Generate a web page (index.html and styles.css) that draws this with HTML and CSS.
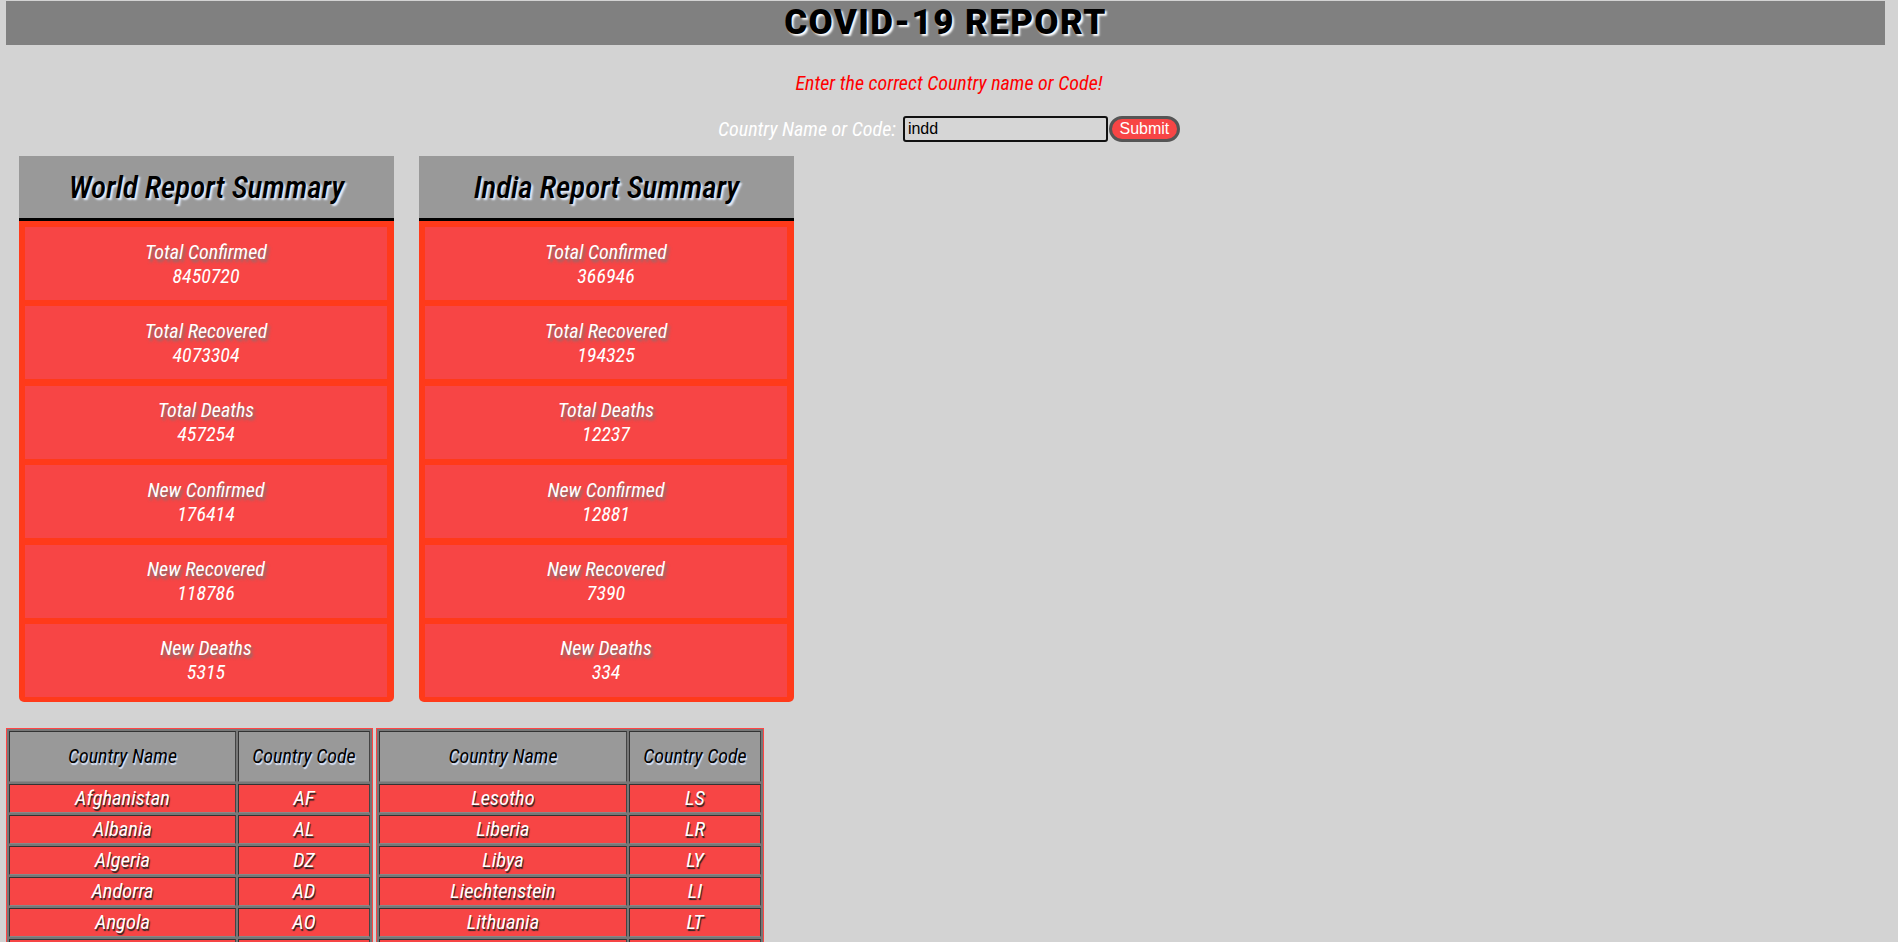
FILE: index.html
```html
<!DOCTYPE html>
<html lang="en">
<head>
<meta charset="utf-8">
<title>COVID-19 Report</title>
<link rel="stylesheet" href="styles.css">
</head>
<body>
<header class="topbar"><h1 class="title">COVID-19 REPORT</h1></header>
<p class="msg">Enter the correct Country name or Code!</p>
<form class="search">
  <label class="search-label" for="q">Country Name or Code:</label>
  <span class="search-controls">
    <input class="search-input" id="q" type="text" value="indd">
    <button class="search-btn" type="button">Submit</button>
  </span>
</form>
<section class="cards">
  <div class="card">
    <div class="card-head">World Report Summary</div>
    <div class="card-body">
      <div class="item"><span class="item-label">Total Confirmed</span><span class="item-value">8450720</span></div>
      <div class="item"><span class="item-label">Total Recovered</span><span class="item-value">4073304</span></div>
      <div class="item"><span class="item-label">Total Deaths</span><span class="item-value">457254</span></div>
      <div class="item"><span class="item-label">New Confirmed</span><span class="item-value">176414</span></div>
      <div class="item"><span class="item-label">New Recovered</span><span class="item-value">118786</span></div>
      <div class="item"><span class="item-label">New Deaths</span><span class="item-value">5315</span></div>
    </div>
  </div>
  <div class="card">
    <div class="card-head">India Report Summary</div>
    <div class="card-body">
      <div class="item"><span class="item-label">Total Confirmed</span><span class="item-value">366946</span></div>
      <div class="item"><span class="item-label">Total Recovered</span><span class="item-value">194325</span></div>
      <div class="item"><span class="item-label">Total Deaths</span><span class="item-value">12237</span></div>
      <div class="item"><span class="item-label">New Confirmed</span><span class="item-value">12881</span></div>
      <div class="item"><span class="item-label">New Recovered</span><span class="item-value">7390</span></div>
      <div class="item"><span class="item-label">New Deaths</span><span class="item-value">334</span></div>
    </div>
  </div>
</section>
<section class="tables">
  <table class="ctable ctable-a">
    <thead><tr><th class="col-name">Country Name</th><th class="col-code">Country Code</th></tr></thead>
    <tbody>
      <tr><td>Afghanistan</td><td>AF</td></tr>
      <tr><td>Albania</td><td>AL</td></tr>
      <tr><td>Algeria</td><td>DZ</td></tr>
      <tr><td>Andorra</td><td>AD</td></tr>
      <tr><td>Angola</td><td>AO</td></tr>
      <tr><td>Anguilla</td><td>AI</td></tr>
      <tr><td>Antarctica</td><td>AQ</td></tr>
    </tbody>
  </table>
  <table class="ctable ctable-b">
    <thead><tr><th class="col-name">Country Name</th><th class="col-code">Country Code</th></tr></thead>
    <tbody>
      <tr><td>Lesotho</td><td>LS</td></tr>
      <tr><td>Liberia</td><td>LR</td></tr>
      <tr><td>Libya</td><td>LY</td></tr>
      <tr><td>Liechtenstein</td><td>LI</td></tr>
      <tr><td>Lithuania</td><td>LT</td></tr>
      <tr><td>Luxembourg</td><td>LU</td></tr>
      <tr><td>Macao</td><td>MO</td></tr>
    </tbody>
  </table>
</section>
</body>
</html>
```
FILE: styles.css
```css
html, body {
  overflow: hidden;
}
body {
  margin: 0;
  background: #d3d3d3;
  font-family: "Roboto Condensed", "Roboto", "Liberation Sans Narrow", sans-serif;
  font-style: italic;
}
.topbar {
  margin: 1px 13px 0 6px;
  height: 44px;
  background: #808080;
  display: flex;
  align-items: center;
  justify-content: center;
}
.title {
  margin: 0;
  font-family: "Roboto", "Liberation Sans Narrow", sans-serif;
  font-style: normal;
  font-weight: 900;
  font-size: 35px;
  letter-spacing: 1.4px;
  line-height: 40px;
  color: #000;
  text-shadow: 2px 2px 2px #fff;
}
.msg {
  margin: 0;
  padding-top: 26px;
  line-height: 24px;
  font-size: 20px;
  color: #ff0000;
  text-align: center;
}
.search {
  margin: 21px 0 0 0;
  height: 26px;
  display: flex;
  justify-content: center;
  align-items: center;
  gap: 7px;
}
.search-label {
  color: #fff;
  font-size: 20px;
}
.search-controls {
  display: flex;
  align-items: center;
  gap: 1px;
}
.search-input {
  box-sizing: border-box;
  width: 205px;
  height: 26px;
  margin: 0;
  padding: 0 3px;
  border: 2px solid #111;
  border-radius: 3px;
  background: #d6d6d6;
  font: 16px "Liberation Sans", Arial, sans-serif;
  color: #000;
}
.search-btn {
  box-sizing: border-box;
  width: 71px;
  height: 26px;
  margin: 0;
  padding: 0;
  border: 3px solid #555;
  border-radius: 13px;
  background: #f74545;
  color: #fff;
  font: 16px "Liberation Sans", Arial, sans-serif;
}
.cards {
  display: flex;
  gap: 25px;
  margin: 14px 0 0 19px;
}
.card {
  width: 375px;
}
.card-head {
  height: 62px;
  background: #999;
  border-bottom: 3px solid #000;
  display: flex;
  align-items: center;
  justify-content: center;
  font-size: 31px;
  font-weight: 500;
  color: #000;
  text-shadow: 2px 2px 2px #e8f0ff;
}
.card-body {
  background: #ff3a1a;
  padding: 6px 7px 5px 6px;
  display: flex;
  flex-direction: column;
  gap: 6.4px;
  border-radius: 0 0 5px 5px;
}
.item {
  height: 73px;
  background: #f74545;
  display: flex;
  flex-direction: column;
  justify-content: center;
  align-items: center;
  color: #fff;
  font-size: 20px;
  line-height: 24px;
}
.item-label {
  text-shadow: 2px 3px 3px #777;
}
.tables {
  display: flex;
  align-items: flex-start;
  gap: 3px;
  margin: 26px 0 0 6px;
}
.ctable {
  border: 1px solid #f44;
  background: #777;
  border-spacing: 2px;
  table-layout: fixed;
}
.ctable th,
.ctable td {
  box-sizing: border-box;
  padding: 0;
  text-align: center;
  border: 1px solid #333;
  border-bottom-color: #888;
  border-right-color: #444;
}
.ctable th {
  height: 51px;
  background: #999;
  color: #000;
  font-weight: 400;
  font-size: 20px;
  text-shadow: 1px 2px 1px #dde8ff;
}
.ctable td {
  height: 29px;
  background: #f74545;
  color: #fff;
  font-size: 20.5px;
  text-shadow: 1px 2px 1px #222;
}
.ctable-a .col-name { width: 227px; }
.ctable-b .col-name { width: 248px; }
.col-code { width: 132px; }
```
